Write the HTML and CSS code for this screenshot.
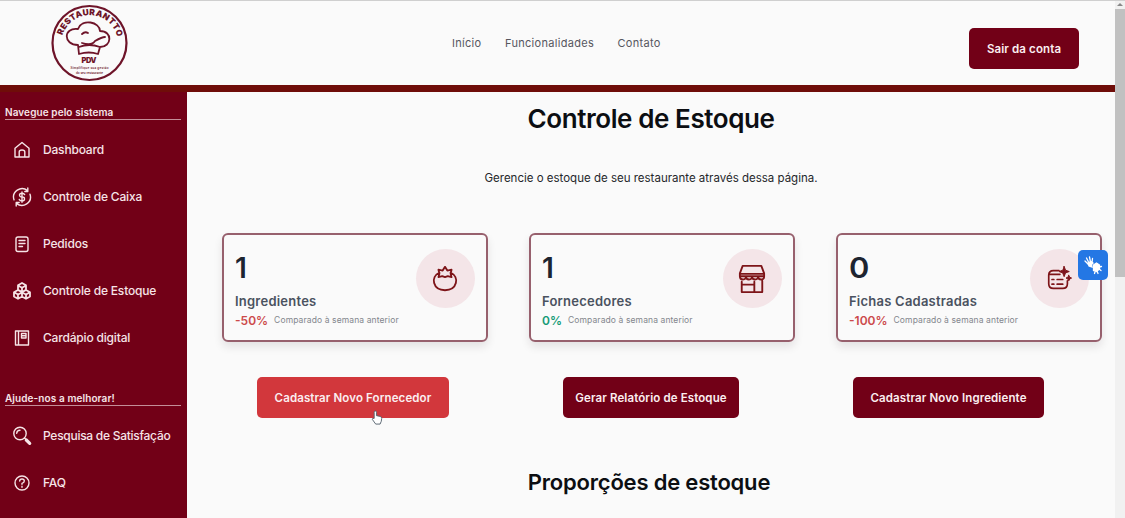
FILE: index.html
```html
<!DOCTYPE html>
<html lang="pt-BR">
<head>
<meta charset="utf-8">
<title>Controle de Estoque</title>
<link rel="stylesheet" href="styles.css">
</head>
<body>
<div class="page">
  <div class="app">
    <header class="header">
      <svg class="logo" viewBox="0 0 78 80" fill="none">
        <circle cx="38.5" cy="40" r="37" stroke="#6e1429" stroke-width="2.2"/>
        <path id="arc" d="M11.500 32.500 A28.300 28.300 0 0 1 66 33"/>
        <text class="logo-arc"><textPath href="#arc" textLength="74">RESTAURANTTO</textPath></text>
        <path d="M27 42C12 42 12 24 27 26C31 15 49 19 49 28C62 28 61 44 49 44L47 51Q38 48 28 51Z M28 44Q38 40 49 44 M31 40Q41 43 44 38Q51 34 54 34 M31 31Q34 28 37 30" stroke="#6e1429" stroke-width="1.8" stroke-linejoin="round" stroke-linecap="round"/>
        <text class="logo-pdv" x="38" y="60" text-anchor="middle" textLength="15">PDV</text>
        <text class="logo-small" x="38.5" y="66" text-anchor="middle" textLength="38">Simplifique sua gestão</text>
        <text class="logo-small" x="38.5" y="71" text-anchor="middle" textLength="27">do seu restaurante</text>
      </svg>
      <nav class="nav"><a>Início</a><a>Funcionalidades</a><a>Contato</a></nav>
      <button class="btn logout">Sair da conta</button>
    </header>
    <div class="body">
      <aside class="sidebar">
        <h2 class="group">Navegue pelo sistema</h2>
        <ul class="menu">
          <li><svg class="icon" viewBox="0 0 20 20"><path d="M3 8.2L10 2.5l7 5.7V17H3zM7.2 17v-5q0-2 2.8-2t2.8 2v5"/></svg><span>Dashboard</span></li>
          <li><svg class="icon" viewBox="0 0 20 20"><path d="M15.5 3.6A8.5 8.5 0 0 0 2 12.8M4.500 16.400A8.500 8.500 0 0 0 18 7.200M15.800 1v3.500h-3M4.200 19v-3.500h3M12.600 7.600Q12 6.300 10 6.300q-2.500 0-2.500 1.800T10 9.900t2.500 2-2.500 1.900q-2.200 0-2.700-1.400M10 5v10.200"/></svg><span>Controle de Caixa</span></li>
          <li><svg class="icon" viewBox="0 0 20 20"><rect x="4" y="3" width="12" height="14.500" rx="2"/><path d="M7 6.500h6M7 9.500h6M7 12.500h3.500"/></svg><span>Pedidos</span></li>
          <li><svg class="icon" viewBox="0 0 20 20"><path d="M10 2l4 2.200v4.600L10 11 6 8.800V4.200zM6 9l4 2.200v4.300l-4 2.300-4-2.300v-4.300zM14 9l4 2.200v4.300l-4 2.300-4-2.300v-4.300zM6 4.500l4 2.200 4-2.200M10 7v4M2.500 11.500L6 13.500l4-2 4 2 3.500-2M6 13.500v4M14 13.500v4" stroke-width="1.800"/></svg><span>Controle de Estoque</span></li>
          <li><svg class="icon" viewBox="0 0 20 20"><path d="M3.500 3h13v14h-13zM6.500 3v14M9.500 5.500h4.500v4.500H9.500zM9.500 7.700h4.500" stroke-width="1.400"/></svg><span>Cardápio digital</span></li>
        </ul>
        <h2 class="group second">Ajude-nos a melhorar!</h2>
        <ul class="menu">
          <li><svg class="icon" viewBox="0 0 20 20"><circle cx="8" cy="7.500" r="6.200"/><path d="M4.700 7.300Q5 4.200 8 4.200M12.500 12l1.800 1.700"/><path d="M14.300 14l3.400 3.300" stroke-width="3.200"/></svg><span class="tight">Pesquisa de Satisfação</span></li>
          <li><svg class="icon" viewBox="0 0 20 20"><circle cx="10" cy="10" r="7"/><path d="M7.700 8Q7.800 6 10 6t2.300 1.900Q12.300 9.500 10 10.300v1M10 13.300v1"/></svg><span>FAQ</span></li>
        </ul>
      </aside>
      <main class="main">
        <h1 class="title">Controle de Estoque</h1>
        <p class="intro">Gerencie o estoque de seu restaurante através dessa página.</p>
        <section class="cards">
          <article class="card">
            <div class="info"><strong class="value">1</strong><span class="label">Ingredientes</span><p class="trend"><b class="down">-50%</b><small>Comparado à semana anterior</small></p></div>
            <div class="badge"><svg viewBox="0 0 30 30"><path d="M9 8C-1 13 2 27 15 27S31 13 21 8M15 2l2.500 4L22 5l-1 4 1 4-4-1-3 1-3-1-4 1 1-4-1-4 4.500 1z"/></svg></div>
          </article>
          <article class="card">
            <div class="info"><strong class="value">1</strong><span class="label">Fornecedores</span><p class="trend"><b class="up">0%</b><small>Comparado à semana anterior</small></p></div>
            <div class="badge"><svg viewBox="0 0 30 30"><path d="M5 1h20l3 8v3H2V9zM2 9.500h26M2 12q0 3.500 3.300 3.500T8.500 12q0 3.500 3.300 3.500T15 12q0 3.500 3.300 3.500t3.200-3.500q0 3.500 3.300 3.500T28 12M4 18v11h22V17M17.500 29V18M4 21h13.500"/></svg></div>
          </article>
          <article class="card">
            <div class="info"><strong class="value wide">0</strong><span class="label">Fichas Cadastradas</span><p class="trend"><b class="down">-100%</b><small>Comparado à semana anterior</small></p></div>
            <div class="badge"><svg viewBox="0 0 30 30"><path d="M15 6H9Q4 6 4 11v9q0 5 5 5h10q5 0 5-5v-3M4 10h12M7.500 15.500h2M13 15.500h6M7.500 20.500h2M13 20.500h6" stroke-width="1.800"/><path d="M20.500 1.500l1.500 4 4 1.500-4 1.500-1.500 4-1.500-4-4-1.500 4-1.500zM25.500 11l1 2 2 1-2 1-1 2-1-2-2-1 2-1z" fill="#7d1420" stroke-width="1"/></svg></div>
          </article>
        </section>
        <div class="actions">
          <button class="btn hover b1">Cadastrar Novo Fornecedor
            <svg class="cursor" viewBox="0 0 12 16"><path d="M3 9V2.500q0-1.500 1.200-1.500t1.200 1.500V6l4 .8Q11 7.300 11 9q0 3-1.700 6H4.600L1 10q-.4-1.500 2-1z" fill="#fff" stroke="#56636f"/></svg>
          </button>
          <button class="btn b2">Gerar Relatório de Estoque</button>
          <button class="btn b3">Cadastrar Novo Ingrediente</button>
        </div>
        <h2 class="title sub">Proporções de estoque</h2>
      </main>
    </div>
    <div class="vlibras"><svg viewBox="0 0 20 20"><path d="M5 9L2 6M6 8L3.500 3M7.500 7L6.500 2M9 7.500L9.500 3.500M12 17l-.5 1.500M14 16l1 2.500M16 14l2 1.500M16 12l2.500-.5"/><path d="M5 8l3-1.500L10 8 8.500 9.500 9 12 6 11z" fill="#fff"/><path d="M10.500 10l3-2 3 2v4l-3 2.500-3-1z" fill="#fff"/></svg></div>
  </div>
  <div class="scrollbar"><div class="arrow"></div><div class="thumb"></div></div>
</div>
</body>
</html>
```
FILE: styles.css
```css
* { box-sizing: border-box; margin: 0; padding: 0; }
body { font-family: Inter, "Liberation Sans", sans-serif; background: #fafafa; height: 518px; overflow: hidden; color: #0c0e12; }
.page { display: flex; height: 518px; border-top: 1px solid #cfcfcf; }
.app { width: 1115px; display: flex; flex-direction: column; position: relative; }
.header { height: 91px; flex: none; border-bottom: 7px solid #6f0d09; display: grid; grid-template-columns: 452px 1fr 110px; padding-right: 36px; }
.logo { width: 78px; height: 80px; margin: 2px 0 0 51px; }
.logo-arc { font-size: 8.5px; font-weight: 900; fill: #6e1429; }
.logo-pdv { font-size: 7.5px; font-weight: 900; fill: #6e1429; }
.logo-small { font-size: 3px; font-weight: 600; fill: #6e1429; }
.nav { display: flex; gap: 23.5px; padding-top: 35px; font-size: 11px; line-height: 14px; letter-spacing: .3px; color: #56565e; white-space: nowrap; }
.btn { border: 0; border-radius: 5px; background: #720017; color: #fbeef0; font: 600 11.5px/41px Inter, "Liberation Sans", sans-serif; letter-spacing: .12px; height: 41px; padding-top: 1px; white-space: nowrap; text-align: center; }
.logout { margin-top: 27px; width: 110px; }
.body { display: flex; flex: 1; min-height: 0; }
.sidebar { width: 187px; background: #720017; color: #f6e4e7; padding: 13px 6px 0 5px; overflow: hidden; white-space: nowrap; }
.group { font-size: 10px; line-height: 14px; height: 15px; font-weight: 600; letter-spacing: .09px; border-bottom: 1px solid #c48e98; }
.second { margin-top: 30px; }
.menu { list-style: none; display: grid; grid-auto-rows: 47px; padding-top: 6px; }
.menu li { display: flex; align-items: center; gap: 11px; padding-left: 7px; font-size: 12px; font-weight: 500; letter-spacing: -.18px; }
.menu .tight { letter-spacing: -.27px; }
.icon { width: 20px; height: 20px; fill: none; stroke: #f6e4e7; stroke-width: 1.4; stroke-linejoin: round; stroke-linecap: round; }
.main { flex: 1; padding: 11px 12px 0 35px; min-width: 0; }
.title { font-size: 26px; line-height: 32px; font-weight: 600; letter-spacing: -.42px; text-align: center; padding-right: 23px; white-space: nowrap; }
.intro { font-size: 11.5px; line-height: 16px; text-align: center; margin-top: 35px; padding-right: 23px; color: #25272b; white-space: nowrap; }
.cards { display: grid; grid-template-columns: repeat(3, 266px); gap: 41px; margin-top: 47px; }
.card { height: 109px; border: 2px solid #97606d; border-radius: 6px; padding: 12px 11.5px 0 11px; display: flex; justify-content: space-between; box-shadow: 0 5px 9px rgba(40,20,30,.1); white-space: nowrap; }
.info { display: flex; flex-direction: column; }
.value { font-size: 28px; line-height: 40px; padding-top: 1px; font-weight: 600; color: #1d2430; }
.wide { transform: scaleX(1.1); transform-origin: left; }
.label { font-size: 13px; line-height: 18px; margin-top: 4px; font-weight: 600; letter-spacing: .23px; color: #4a5260; align-self: flex-start; }
.trend { display: flex; gap: 6px; align-items: center; height: 20px; }
.trend b { font-size: 12px; font-weight: 600; }
.trend small { font-size: 8.5px; letter-spacing: .11px; color: #83868d; }
.down { color: #cc4a4b; }
.up { color: #169a77; }
.badge { width: 59px; height: 59px; border-radius: 50%; background: #f4e5e8; display: grid; place-items: center; margin-top: 2px; }
.badge svg { width: 28px; height: 28px; fill: none; stroke: #7d1418; stroke-width: 2; stroke-linejoin: round; stroke-linecap: round; }
.actions { display: flex; justify-content: center; gap: 114px; margin-top: 35px; padding-right: 24px; }
.b1 { width: 192px; position: relative; }
.b2 { width: 176px; }
.b3 { width: 191px; }
.hover { background: #d2373c; }
.cursor { position: absolute; left: 114px; top: 33px; width: 12px; height: 15px; }
.sub { margin-top: 48px; font-size: 22px; letter-spacing: -.2px; padding-right: 27px; }
.vlibras { position: absolute; left: 1078px; top: 249px; width: 30px; height: 30px; border-radius: 5px; background: #2477e4; display: grid; place-items: center; }
.vlibras svg { width: 20px; height: 20px; fill: none; stroke: #fff; stroke-width: 1.3; stroke-linecap: round; }
.scrollbar { width: 10px; background: #f1f1f1; }
.arrow { width: 0; margin: 2px auto 3px; border: 3px solid transparent; border-top: 0; border-bottom: 3px solid #888; }
.thumb { height: 268px; background: #c1c1c1; }
```
